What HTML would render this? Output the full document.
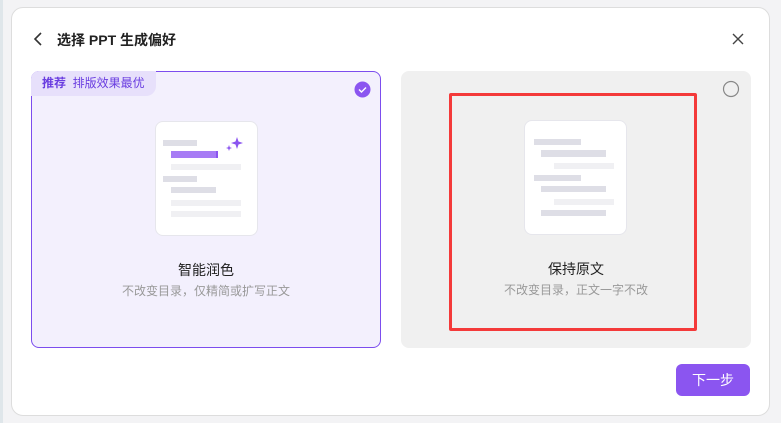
<!DOCTYPE html>
<html><head><meta charset="utf-8"><style>
*{margin:0;padding:0;box-sizing:border-box}
body{width:781px;height:423px;background:#f3f3f5;position:relative;overflow:hidden;font-family:"Liberation Sans","Noto Sans CJK SC",sans-serif}
.strip{position:absolute;left:0;top:0;width:3px;height:423px;background:#dfe6ea}
.modal{position:absolute;left:11px;top:7px;width:759px;height:409px;background:#fff;border-radius:12px;border:1px solid #ddd}
.abs{position:absolute}
.title{left:57px;top:30px;font-size:14px;font-weight:bold;color:#222}
.card{position:absolute;top:71px;width:350px;height:277px;border-radius:8px}
.l{left:31px;background:#f3f0fd;border:1px solid #7c4dee}
.r{left:401px;background:#f0f0f0}
.tag{left:-1px;top:-1px;height:25px;padding:0 11px;line-height:25px;background:#e7e0fb;border-radius:8px 0 10px 0;font-size:12px;color:#6a3de0}
.doc{position:absolute;top:49px;width:103px;height:115px;background:#fff;border:1px solid #e6e6ec;border-radius:8px}
.ln{position:absolute;height:6px;background:#dedee6}
.lt{background:#f0f0f3}
.ct{position:absolute;width:100%;text-align:center;font-size:14px;color:#222;top:188px}
.cs{position:absolute;width:100%;text-align:center;font-size:12px;color:#999;top:210px}
</style></head><body>
<div class="strip"></div>
<div class="modal"></div>
<svg class="abs" style="left:32px;top:31px" width="12" height="16"><path d="M9 2L3 8l6 6" stroke="#333" stroke-width="1.6" fill="none"/></svg>
<div class="abs title">选择 PPT 生成偏好</div>
<svg class="abs" style="left:731px;top:32px" width="14" height="14"><path d="M2 2l10 10M12 2L2 12" stroke="#444" stroke-width="1.4"/></svg>
<div class="card l">
 <div class="abs tag"><b>推荐</b>&nbsp; 排版效果最优</div>
 <svg class="abs" style="left:322px;top:9px" width="17" height="17"><circle cx="8.5" cy="8.5" r="8" fill="#8b55f0"/><path d="M5 8.5l2.5 2.5 4.5-4.5" stroke="#fff" stroke-width="1.4" fill="none"/></svg>
 <div class="doc" style="left:123px">
  <div class="ln" style="left:7px;top:18px;width:34px"></div>
  <div class="ln" style="left:15px;top:29px;width:47px;height:7px;background:#a77cf5;border-right:2px solid #8b55f0"></div>
  <div class="ln lt" style="left:15px;top:42px;width:70px"></div>
  <div class="ln" style="left:7px;top:54px;width:34px"></div>
  <div class="ln" style="left:15px;top:65px;width:45px"></div>
  <div class="ln lt" style="left:15px;top:78px;width:70px"></div>
  <div class="ln lt" style="left:15px;top:89px;width:70px"></div>
  <svg class="abs" style="left:68px;top:14px" width="20" height="18"><path d="M13 1l1.5 4.5L19 7l-4.5 1.5L13 13l-1.5-4.5L7 7l4.5-1.5z" fill="#8b55f0"/><path d="M5 9l.8 2.2L8 12l-2.2.8L5 15l-.8-2.2L2 12l2.2-.8z" fill="#8b55f0"/></svg>
 </div>
 <div class="ct">智能润色</div>
 <div class="cs">不改变目录，仅精简或扩写正文</div>
</div>
<div class="card r">
 <svg class="abs" style="left:321px;top:9px" width="18" height="18"><circle cx="9" cy="9" r="7.5" fill="none" stroke="#888" stroke-width="1.2"/></svg>
 <div class="doc" style="left:123px">
  <div class="ln" style="left:9px;top:18px;width:47px"></div>
  <div class="ln" style="left:16px;top:29px;width:65px;height:7px"></div>
  <div class="ln lt" style="left:29px;top:42px;width:60px"></div>
  <div class="ln" style="left:9px;top:54px;width:47px"></div>
  <div class="ln" style="left:16px;top:65px;width:65px"></div>
  <div class="ln lt" style="left:29px;top:78px;width:60px"></div>
  <div class="ln" style="left:16px;top:89px;width:65px"></div>
 </div>
 <div class="ct">保持原文</div>
 <div class="cs">不改变目录，正文一字不改</div>
</div>
<div class="abs" style="left:449px;top:93px;width:248px;height:238px;border:3px solid #f43a3a;border-radius:2px"></div>
<div class="abs" style="left:676px;top:364px;width:74px;height:32px;background:#8b55f0;border-radius:6px;color:#fff;font-size:14px;text-align:center;line-height:32px">下一步</div>
</body></html>
